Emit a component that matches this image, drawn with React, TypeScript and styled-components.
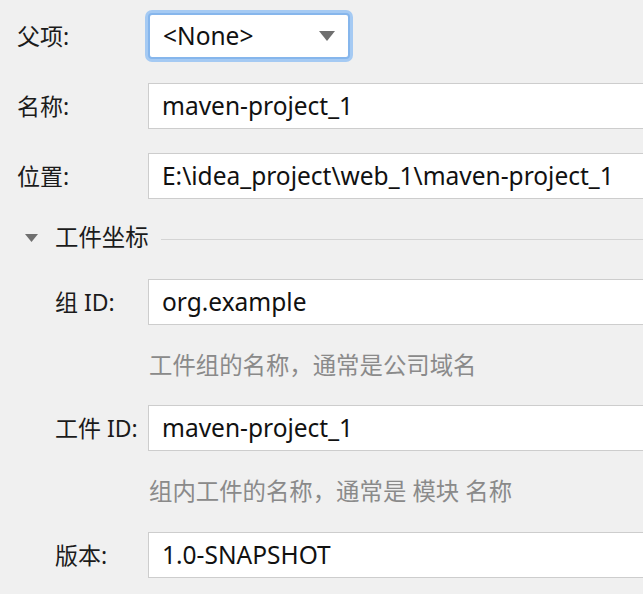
import React from 'react';
import styled, { createGlobalStyle } from 'styled-components';

const Global = createGlobalStyle`
  html, body { margin: 0; padding: 0; background: #f0f0f0; }
  body {
    font-family: "Noto Sans", "Noto Sans CJK SC", sans-serif;
    color: #1b1b1b;
    overflow: hidden;
  }
`;

const Form = styled.div`
  width: 643px;
  height: 594px;
  box-sizing: border-box;
  padding: 13px 0 0 17px;
  display: flex;
  flex-direction: column;
  overflow: hidden;
`;

const Row = styled.div<{ $indent?: number; $mt?: number }>`
  display: flex;
  align-items: center;
  height: 46px;
  flex: none;
  margin-top: ${(p) => p.$mt ?? 0}px;
  padding-left: ${(p) => p.$indent ?? 0}px;
`;

const Label = styled.div<{ $w: number }>`
  width: ${(p) => p.$w}px;
  flex: none;
  font-size: 23px;
  line-height: 1;
  white-space: nowrap;
`;

const TextField = styled.div`
  flex: 1;
  height: 46px;
  box-sizing: border-box;
  background: #fff;
  border: 1px solid #cdcdcd;
  border-right: none;
  display: flex;
  align-items: center;
  padding-left: 13px;
  font-size: 24.5px;
  line-height: 1;
  color: #111;
  white-space: nowrap;
  overflow: hidden;
`;

const Select = styled.div`
  width: 202px;
  height: 46px;
  box-sizing: border-box;
  background: #fff;
  border: 2px solid #86b6ec;
  border-radius: 4px;
  box-shadow: 0 0 0 3px #a5caf3;
  display: flex;
  align-items: center;
  justify-content: space-between;
  padding: 0 13px 0 13px;
  font-size: 24.5px;
  line-height: 1;
  color: #111;
`;

const Header = styled.div<{ $mt: number }>`
  display: flex;
  align-items: center;
  height: 24px;
  flex: none;
  margin-top: ${(p) => p.$mt}px;
`;

const Caret = styled.svg`
  margin-left: 8px;
  margin-right: 17px;
  flex: none;
`;

const HeaderTitle = styled.div`
  font-size: 23.4px;
  line-height: 1;
  white-space: nowrap;
`;

const Rule = styled.div`
  flex: 1;
  height: 1px;
  background: #d4d4d4;
  margin-left: 12px;
  margin-top: 2px;
`;

const Hint = styled.div<{ $mt: number }>`
  height: 24px;
  flex: none;
  display: flex;
  align-items: center;
  margin-top: ${(p) => p.$mt}px;
  margin-left: 132px;
  color: #8a8a8a;
  font-size: 23.4px;
  line-height: 1;
  white-space: nowrap;
`;

export default function App() {
  return (
    <>
      <Global />
      <Form>
        <Row>
          <Label $w={131}>父项:</Label>
          <Select>
            <span>&lt;None&gt;</span>
            <svg width="16" height="10" viewBox="0 0 16 10">
              <path d="M0 0 H16 L8 10 Z" fill="#6f6f6f" />
            </svg>
          </Select>
        </Row>
        <Row $mt={24}>
          <Label $w={131}>名称:</Label>
          <TextField>maven-project_1</TextField>
        </Row>
        <Row $mt={24}>
          <Label $w={131}>位置:</Label>
          <TextField>E:\idea_project\web_1\maven-project_1</TextField>
        </Row>
        <Header $mt={27}>
          <Caret width="13" height="8" viewBox="0 0 13 8">
            <path d="M0 0 H13 L6.5 8 Z" fill="#6f6f6f" />
          </Caret>
          <HeaderTitle>工件坐标</HeaderTitle>
          <Rule />
        </Header>
        <Row $mt={29} $indent={38}>
          <Label $w={93}>组 ID:</Label>
          <TextField>org.example</TextField>
        </Row>
        <Hint $mt={29}>工件组的名称，通常是公司域名</Hint>
        <Row $mt={27} $indent={38}>
          <Label $w={93}>工件 ID:</Label>
          <TextField>maven-project_1</TextField>
        </Row>
        <Hint $mt={29}>组内工件的名称，通常是 模块 名称</Hint>
        <Row $mt={28} $indent={38}>
          <Label $w={93}>版本:</Label>
          <TextField>1.0-SNAPSHOT</TextField>
        </Row>
      </Form>
    </>
  );
}
